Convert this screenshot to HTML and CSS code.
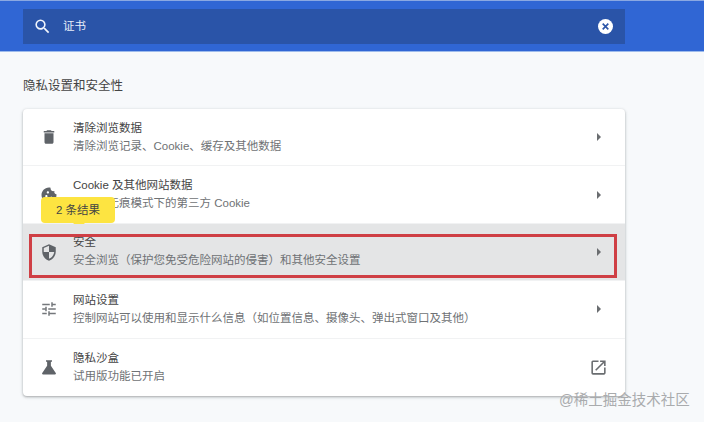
FILE: index.html
```html
<!DOCTYPE html>
<html lang="zh">
<head>
<meta charset="utf-8">
<title>隐私设置和安全性</title>
<link rel="stylesheet" href="styles.css">
</head>
<body>
<header class="topbar">
  <div class="search">
    <svg class="search-icon" viewBox="0 0 24 24"><path d="M15.5 14h-.79l-.28-.27A6.47 6.47 0 0 0 16 9.5 6.5 6.5 0 1 0 9.5 16c1.61 0 3.09-.59 4.23-1.57l.27.28v.79l5 4.99L20.49 19l-4.99-5zm-6 0C7.01 14 5 11.99 5 9.5S7.01 5 9.5 5 14 7.01 14 9.5 11.99 14 9.5 14z"/></svg>
    <span class="query">证书</span>
    <svg class="clear-icon" viewBox="0 0 24 24"><circle cx="12" cy="12" r="12" fill="#fff"/><path d="M7.500 7.500l9 9M16.500 7.500l-9 9" stroke="#2b55a8" stroke-width="2.6"/></svg>
  </div>
</header>
<main class="content">
  <h2 class="section-title">隐私设置和安全性</h2>
  <div class="card">
    <div class="row">
      <svg class="row-icon" viewBox="0 0 24 24"><path d="M6 19c0 1.100.9 2 2 2h8c1.100 0 2-.9 2-2V7H6v12zM19 4h-3.500l-1-1h-5l-1 1H5v2h14V4z"/></svg>
      <div class="texts"><div class="title">清除浏览数据</div><div class="sub">清除浏览记录、Cookie、缓存及其他数据</div></div>
      <span class="arrow"></span>
    </div>
    <div class="row">
      <svg class="row-icon" viewBox="0 0 24 24"><path d="M21.950 10.990c-1.790-.03-3.700-1.950-2.680-4.220-2.970 1-5.780-1.590-5.190-4.560C7.110.74 2 6.410 2 12c0 5.520 4.480 10 10 10 5.890 0 10.540-5.080 9.950-11.010zM8.500 15c-.83 0-1.500-.67-1.500-1.500S7.670 12 8.500 12s1.500.67 1.500 1.500S9.330 15 8.500 15zm2-5C9.670 10 9 9.330 9 8.500S9.670 7 10.500 7s1.500.67 1.500 1.500-.67 1.500-1.500 1.500zm4.500 6c-.55 0-1-.45-1-1s.45-1 1-1 1 .45 1 1-.45 1-1 1z"/></svg>
      <div class="texts"><div class="title">Cookie 及其他网站数据</div><div class="sub">已阻止无痕模式下的第三方 Cookie</div></div>
      <span class="arrow"></span>
      <div class="bubble">2 条结果</div>
    </div>
    <div class="row row-active">
      <svg class="row-icon" viewBox="0 0 24 24"><path fill-rule="evenodd" d="M12 1.500 3 5.500v6c0 5.500 3.800 10.700 9 12 5.200-1.300 9-6.500 9-12v-6l-9-4zm0 10.500h7c-.5 4.100-3.300 7.800-7 8.900V12H5V6.800l7-3.100V12z"/></svg>
      <div class="texts"><div class="title">安全</div><div class="sub">安全浏览（保护您免受危险网站的侵害）和其他安全设置</div></div>
      <span class="arrow"></span>
      <div class="highlight"></div>
    </div>
    <div class="row">
      <svg class="row-icon row-icon-light" viewBox="0 0 24 24"><path d="M3 17v2h6v-2H3zM3 5v2h10V5H3zm10 16v-2h8v-2h-8v-2h-2v6h2zM7 9v2H3v2h4v2h2V9H7zm14 4v-2H11v2h10zm-6-4h2V7h4V5h-4V3h-2v6z"/></svg>
      <div class="texts"><div class="title">网站设置</div><div class="sub">控制网站可以使用和显示什么信息（如位置信息、摄像头、弹出式窗口及其他）</div></div>
      <span class="arrow"></span>
    </div>
    <div class="row">
      <svg class="row-icon" viewBox="0 0 24 24"><path d="M8 3h8v2h-1.500v5.200L21 20c.6 1 0 2-1 2H4c-1 0-1.600-1-1-2l6.500-9.800V5H8V3z"/></svg>
      <div class="texts"><div class="title">隐私沙盒</div><div class="sub">试用版功能已开启</div></div>
      <svg class="external" viewBox="0 0 24 24"><path d="M19 19H5V5h7V3H5a2 2 0 0 0-2 2v14a2 2 0 0 0 2 2h14c1.100 0 2-.9 2-2v-7h-2v7zM14 3v2h3.590l-9.830 9.830 1.410 1.410L19 6.410V10h2V3h-7z"/></svg>
    </div>
  </div>
</main>
<div class="watermark">@稀土掘金技术社区</div>
</body>
</html>
```
FILE: styles.css
```css
* { box-sizing: border-box; }
html, body { margin: 0; height: 422px; overflow: hidden; }
body {
  position: relative;
  background: #f7f9fb;
  font-family: "Liberation Sans", "Noto Sans CJK SC", sans-serif;
  color: #3c4043;
}
.topbar {
  height: 52px;
  padding: 9px 79px 0 23px;
  background: #3066d4;
  border-top: 1px solid #8aa8e2;
  border-bottom: 1px solid #9dbbec;
}
.search {
  height: 35px;
  margin-top: -1px;
  display: flex;
  align-items: center;
  padding: 0 11px 0 10px;
  background: #2a54a8;
  color: #fff;
}
.search-icon { width: 19px; height: 19px; fill: #f2f6fd; flex: none; }
.query { margin: 0 0 3px 11px; font-size: 11.500px; color: #e8eefa; flex: 1; }
.clear-icon { width: 15px; height: 15px; flex: none; margin-right: 1px; }
.content { padding: 0 79px 0 23px; }
.section-title {
  margin: 0;
  height: 57px;
  padding-top: 26px;
  font-size: 12.500px;
  line-height: 17px;
  font-weight: 400;
  color: #444;
}
.card {
  background: #fff;
  border-radius: 4px;
  box-shadow: 0 1px 2px rgba(60, 64, 67, .3), 0 1px 3px 1px rgba(60, 64, 67, .12);
}
.row {
  position: relative;
  height: 57.400px;
  display: flex;
  align-items: center;
  padding: 0 23px 0 17px;
  border-bottom: 1px solid #f1f2f3;
}
.row:last-child { border-bottom: 0; }
.row-active { background: #e4e5e6; }
.row-icon { width: 18px; height: 18px; fill: #5f6368; flex: none; }
.row-icon-light { fill: #74777b; }
.texts { flex: 1; margin-left: 15px; }
.title { font-size: 11.500px; line-height: 17px; color: #444; }
.sub { font-size: 11.500px; line-height: 17px; margin-top: 1px; color: #6f7275; }
.arrow {
  width: 0;
  height: 0;
  border-left: 4px solid #6a6d70;
  border-top: 4px solid transparent;
  border-bottom: 4px solid transparent;
  margin-right: 1px;
}
.external { width: 19px; height: 19px; fill: #6a6d70; margin-right: -6px; }
.bubble {
  position: absolute;
  left: 18px;
  top: 31px;
  width: 74px;
  height: 26px;
  background: #fde441;
  border-radius: 4px;
  text-align: center;
  font-size: 11.500px;
  line-height: 26px;
  color: #444;
}
.bubble::after {
  content: "";
  position: absolute;
  left: 32px;
  bottom: -5px;
  border-top: 5px solid #fde441;
  border-left: 6px solid transparent;
  border-right: 6px solid transparent;
}
.highlight {
  position: absolute;
  left: 6px;
  right: 8px;
  top: 10px;
  bottom: 2px;
  border: 3px solid #cf3f45;
  pointer-events: none;
}
.watermark {
  position: absolute;
  left: 559px;
  top: 390px;
  font-size: 14.500px;
  line-height: 20px;
  color: #a9abad;
  white-space: nowrap;
}
```
